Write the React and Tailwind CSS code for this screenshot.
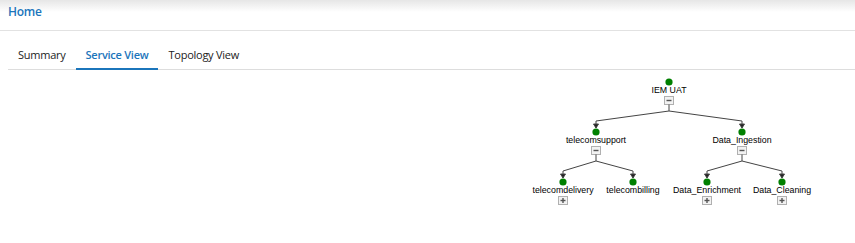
import React from 'react';

const tabs = ['Summary', 'Service View', 'Topology View'];

// tree layout, x centers and dot y per level
const nodes = [
  { id: 'root', label: 'IEM UAT', x: 669, y: 82, open: true },
  { id: 'ts', label: 'telecomsupport', x: 596, y: 132, open: true, parent: 'root' },
  { id: 'di', label: 'Data_Ingestion', x: 742, y: 132, open: true, parent: 'root' },
  { id: 'td', label: 'telecomdelivery', x: 563, y: 182, open: false, parent: 'ts' },
  { id: 'tb', label: 'telecombilling', x: 633, y: 182, open: null, parent: 'ts' },
  { id: 'de', label: 'Data_Enrichment', x: 707, y: 182, open: false, parent: 'di' },
  { id: 'dc', label: 'Data_Cleaning', x: 782, y: 182, open: false, parent: 'di' },
];

const Edge = ({ p, c }) => {
  const stemY = p.y + 29;
  const midY = c.y - 11;
  const tip = c.y - 4;
  return (
    <g stroke="#444" strokeWidth="1" fill="none">
      <path d={`M${p.x} ${stemY} L${c.x} ${midY} L${c.x} ${tip}`} />
      <path d={`M${c.x - 2.5} ${tip - 4} L${c.x} ${tip} L${c.x + 2.5} ${tip - 4} Z`} fill="#222" />
    </g>
  );
};

const Node = ({ n }) => (
  <g>
    <circle cx={n.x} cy={n.y} r="3.6" fill="#008000" />
    <text
      x={n.x}
      y={n.y + 11}
      textAnchor="middle"
      fontSize="8.8"
      fill="#000"
      fontFamily="'Liberation Sans', Arial, sans-serif"
    >
      {n.label}
    </text>
    {n.open !== null && (
      <g>
        <rect x={n.x - 4.5} y={n.y + 14.5} width="9" height="8" fill="#f2f2f2" stroke="#b0b0b0" strokeWidth="1" />
        <path d={`M${n.x - 2.5} ${n.y + 18.5} H${n.x + 2.5}`} stroke="#555" strokeWidth="1.4" />
        {!n.open && <path d={`M${n.x} ${n.y + 16} V${n.y + 21}`} stroke="#555" strokeWidth="1.4" />}
        {n.open && <path d={`M${n.x} ${n.y + 22.5} V${n.y + 29}`} stroke="#444" strokeWidth="1" />}
      </g>
    )}
  </g>
);

const ServiceTree = () => {
  const byId = Object.fromEntries(nodes.map((n) => [n.id, n]));
  return (
    <svg width="855" height="173" viewBox="0 70 855 173" className="block">
      {nodes.filter((n) => n.parent).map((n) => (
        <Edge key={n.id} p={byId[n.parent]} c={n} />
      ))}
      {nodes.map((n) => (
        <Node key={n.id} n={n} />
      ))}
    </svg>
  );
};

export default function App() {
  return (
    <div className="w-[855px] h-[243px] bg-white overflow-hidden font-['Open_Sans',sans-serif]">
      <div className="h-[31px] border-b border-[#e2e2e2] bg-[linear-gradient(to_bottom,#e6e6e6,#ffffff_12px)] px-2 pt-[4px] text-[12px] leading-[16px]">
        <span className="font-semibold text-[#1b75bb] tracking-[-0.3px]">Home</span>
      </div>
      <div className="pl-2 pt-[16px]">
        <div className="flex border-b border-[#dddddd]">
          {tabs.map((t) => (
            <div
              key={t}
              className={`px-[10px] pb-[5px] text-[11px] leading-[16px] tracking-[-0.25px] -mb-px border-b-2 ${
                t === 'Service View'
                  ? 'text-[#1b75bb] font-semibold border-[#1b75bb]'
                  : 'text-[#222] border-transparent'
              }`}
            >
              {t}
            </div>
          ))}
        </div>
      </div>
      <ServiceTree />
    </div>
  );
}
